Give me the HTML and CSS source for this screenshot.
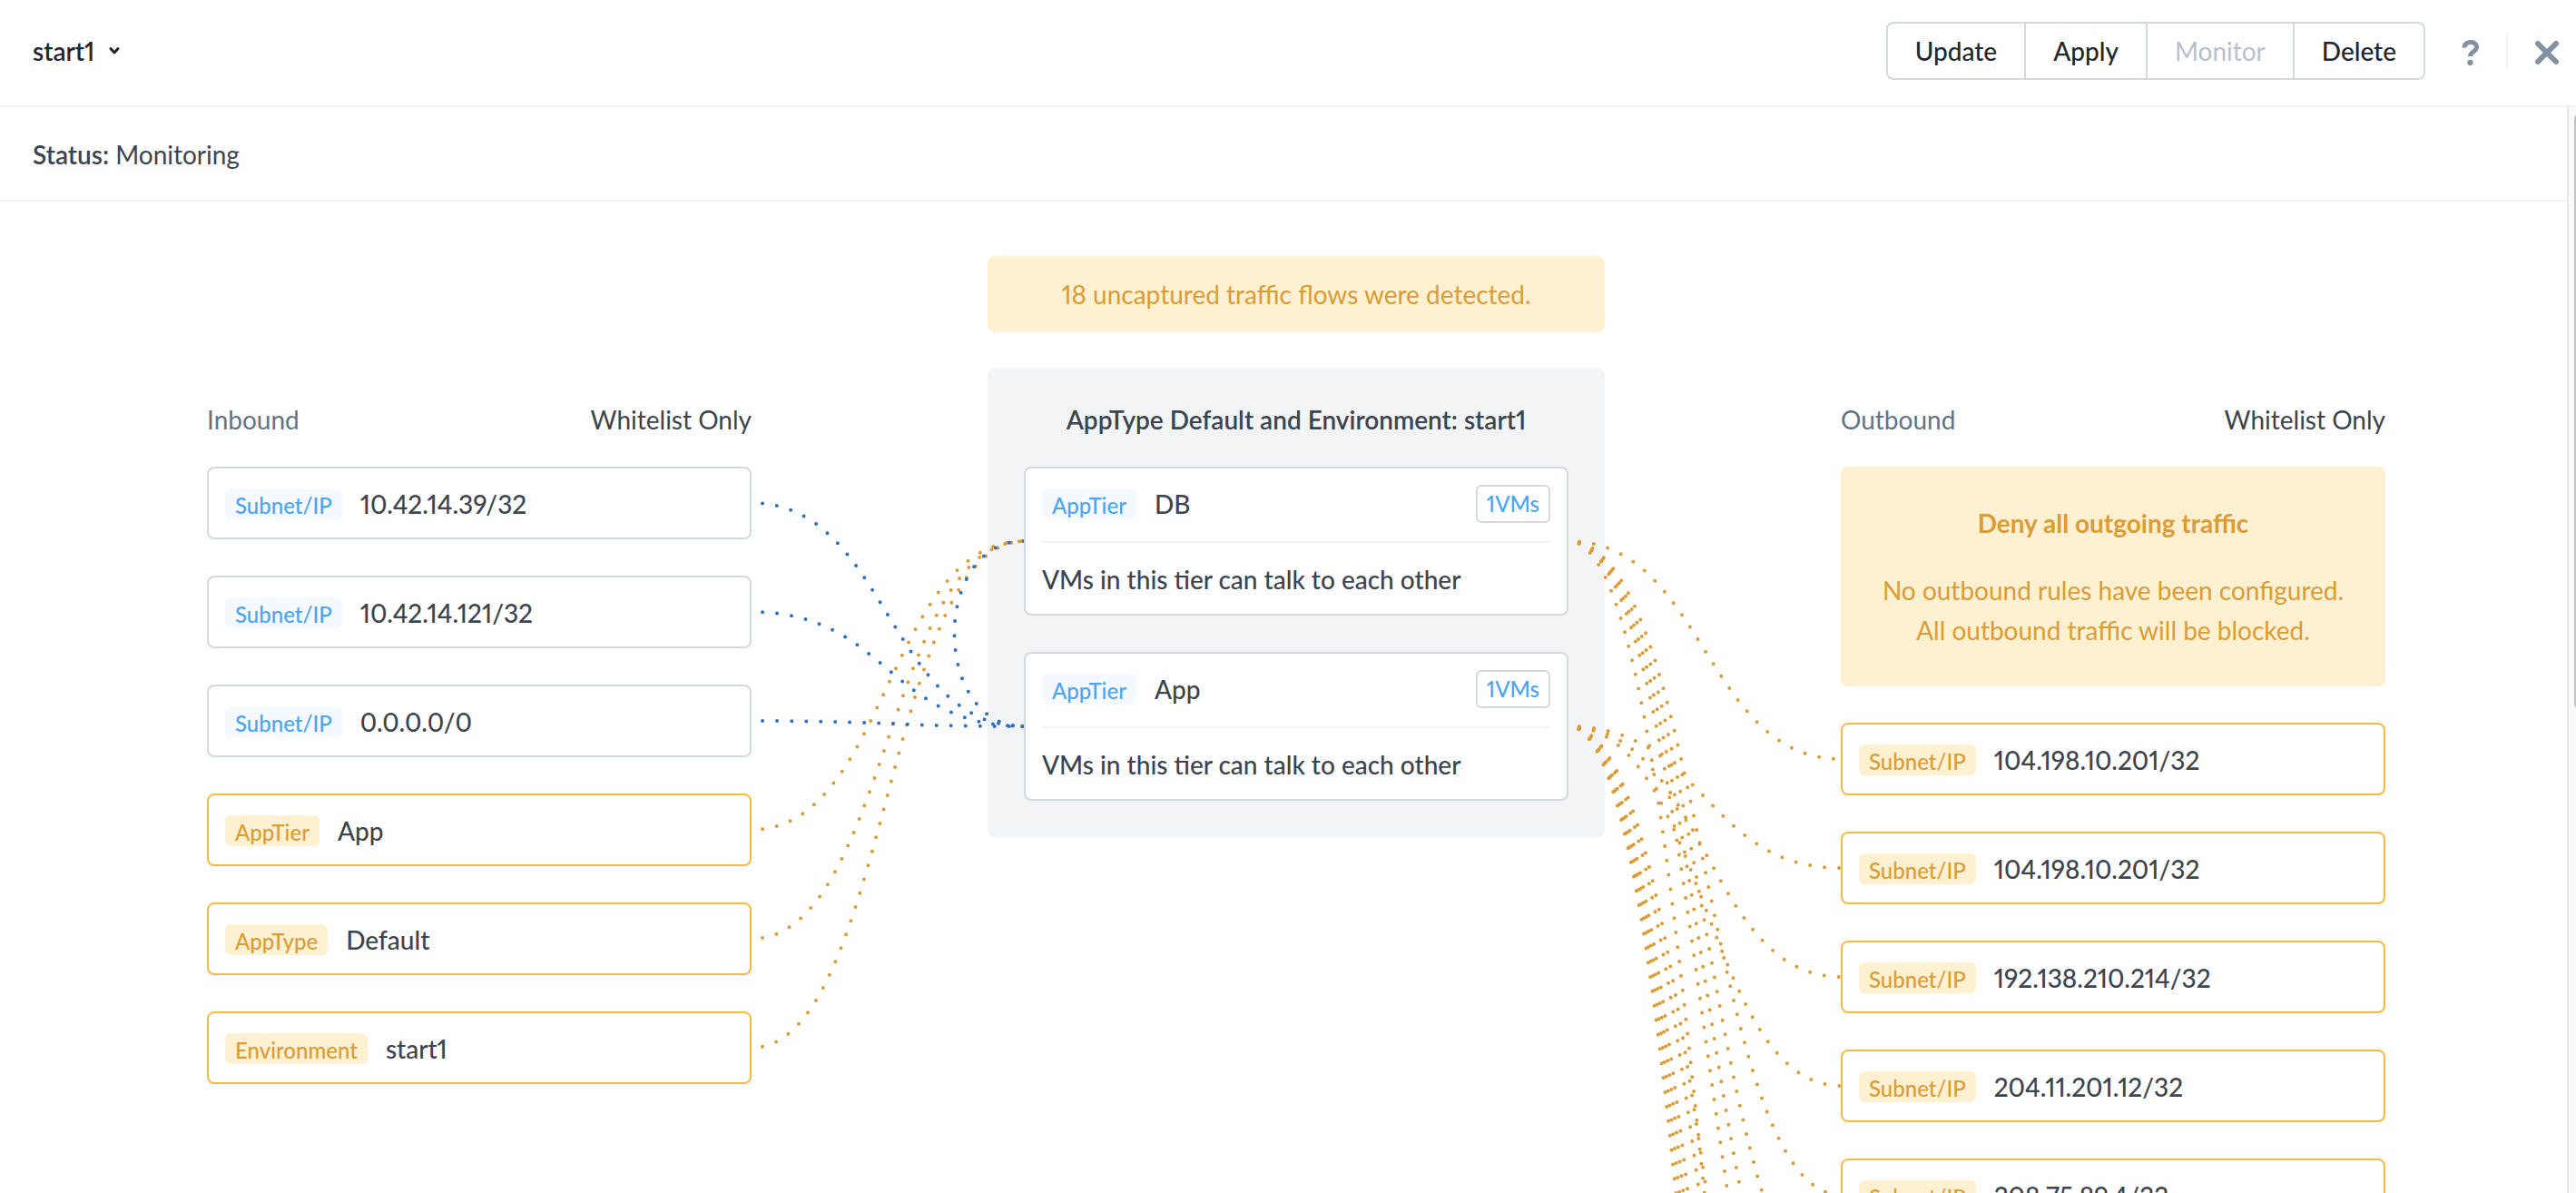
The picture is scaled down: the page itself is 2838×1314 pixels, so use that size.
FILE: index.html
```html
<!DOCTYPE html>
<html lang="en">
<head>
<meta charset="utf-8">
<title>start1 - Security Policy</title>
<link rel="stylesheet" href="styles.css">
</head>
<body>
<div class="app">
  <header class="topbar">
    <button class="policy-menu" type="button">start1
      <svg class="chevron" viewBox="0 0 12 10" aria-hidden="true"><path d="M2 2.5l4 4.5 4-4.5"/></svg>
    </button>
    <div class="actions">
      <div class="button-group">
        <button type="button">Update</button>
        <button type="button">Apply</button>
        <button type="button" disabled>Monitor</button>
        <button type="button">Delete</button>
      </div>
      <button class="icon-button" type="button" aria-label="Help">
        <svg class="help-icon" viewBox="0 0 20 28" aria-hidden="true"><path d="M3 8.500C3 0.500 16.500 0.500 16.500 8C16.500 13 9.500 12.500 9.500 18"/><circle cx="9.500" cy="25" r="3.200"/></svg>
      </button>
      <span class="divider"></span>
      <button class="icon-button" type="button" aria-label="Close">
        <svg class="close-icon" viewBox="0 0 28 28" aria-hidden="true"><path d="M4 4l20 20M24 4L4 24"/></svg>
      </button>
    </div>
  </header>
  <div class="body">
    <main class="content">
      <p class="status"><strong>Status:</strong> Monitoring</p>
      <div class="board" id="board">
        <section class="side">
          <div class="side-head"><h2>Inbound</h2><span>Whitelist Only</span></div>
          <ul class="rules">
            <li class="rule" data-to="app"><span class="tag">Subnet/IP</span>10.42.14.39/32</li>
            <li class="rule" data-to="app"><span class="tag">Subnet/IP</span>10.42.14.121/32</li>
            <li class="rule" data-to="app"><span class="tag">Subnet/IP</span>0.0.0.0/0</li>
            <li class="rule uncaptured" data-to="db"><span class="tag">AppTier</span>App</li>
            <li class="rule uncaptured" data-to="db"><span class="tag">AppType</span>Default</li>
            <li class="rule uncaptured" data-to="db"><span class="tag">Environment</span>start1</li>
          </ul>
        </section>
        <section class="center">
          <p class="alert">18 uncaptured traffic flows were detected.</p>
          <div class="panel">
            <h2>AppType Default and Environment: start1</h2>
            <article class="tier" id="db">
              <div class="tier-head"><span class="tag">AppTier</span><span class="tier-name">DB</span><button class="vms" type="button">1VMs</button></div>
              <p>VMs in this tier can talk to each other</p>
            </article>
            <article class="tier" id="app">
              <div class="tier-head"><span class="tag">AppTier</span><span class="tier-name">App</span><button class="vms" type="button">1VMs</button></div>
              <p>VMs in this tier can talk to each other</p>
            </article>
          </div>
        </section>
        <section class="side">
          <div class="side-head"><h2>Outbound</h2><span>Whitelist Only</span></div>
          <div class="notice">
            <h3>Deny all outgoing traffic</h3>
            <p>No outbound rules have been configured.<br>All outbound traffic will be blocked.</p>
          </div>
          <ul class="rules" id="outbound">
            <li class="rule uncaptured"><span class="tag">Subnet/IP</span>104.198.10.201/32</li>
            <li class="rule uncaptured"><span class="tag">Subnet/IP</span>104.198.10.201/32</li>
            <li class="rule uncaptured"><span class="tag">Subnet/IP</span>192.138.210.214/32</li>
            <li class="rule uncaptured"><span class="tag">Subnet/IP</span>204.11.201.12/32</li>
            <li class="rule uncaptured"><span class="tag">Subnet/IP</span>208.75.89.4/32</li>
          </ul>
        </section>
        <svg class="flows" id="flows" aria-hidden="true"></svg>
      </div>
    </main>
    <div class="scrollbar"><div class="thumb"></div></div>
  </div>
</div>
<script src="script.js"></script>
</body>
</html>
```
FILE: styles.css
```css
* { box-sizing: border-box; }

body {
  margin: 0;
  background: #fff;
  color: #3b444f;
  font-family: Lato, "Open Sans", sans-serif;
  font-size: 28px;
  font-variant-numeric: proportional-nums;
  line-height: 44px;
}

h2, h3, p, ul { margin: 0; padding: 0; font-size: inherit; }
ul { list-style: none; }
button {
  margin: 0;
  padding: 0;
  border: 0;
  background: none;
  color: #22272e;
  font: inherit;
  font-variant-numeric: proportional-nums;
}

.app {
  display: flex;
  flex-direction: column;
  height: 100vh;
  overflow: hidden;
}

.topbar {
  display: flex;
  flex: none;
  align-items: center;
  justify-content: space-between;
  padding: 24px 18px 28px 36px;
  border-bottom: 2px solid #f2f3f5;
}
.policy-menu {
  display: flex;
  align-items: center;
  gap: 16px;
  font-weight: 600;
}
svg { fill: none; stroke: currentColor; }
.chevron { width: 12px; height: 10px; stroke-width: 3; stroke-linecap: round; stroke-linejoin: round; }

.actions { display: flex; align-items: center; }
.button-group {
  display: flex;
  margin-right: 40px;
  border: 2px solid #d4d9df;
  border-radius: 8px;
}
.button-group button { height: 60px; padding: 0 30px; font-weight: 500; }
.button-group button + button { border-left: 2px solid #d4d9df; }
.button-group button:disabled { color: #b8c0cc; font-weight: 400; }
.icon-button { display: flex; padding-top: 4px; color: #8290a2; }
.help-icon { width: 20px; height: 28px; stroke-width: 5; }
.help-icon circle { fill: currentColor; stroke: none; }
.close-icon { width: 28px; height: 28px; stroke-width: 6; stroke-linecap: round; }
.divider { width: 2px; height: 40px; margin: 0 29px; background: #f2f3f5; }

.body { display: flex; flex: 1; min-height: 0; }
.content { flex: 1; overflow: hidden; }
.status {
  padding: 30px 36px 28px;
  border-bottom: 2px solid #f2f3f5;
}
.status strong { font-weight: 600; }

.board {
  position: relative;
  display: flex;
  justify-content: space-between;
  padding: 60px 200px 60px 228px;
}
.side { width: 600px; padding-top: 158px; }
.side-head {
  display: flex;
  justify-content: space-between;
  margin-bottom: 30px;
}
.side-head h2 { color: #627386; font-weight: 400; }

.rules { display: flex; flex-direction: column; gap: 40px; }
.rule {
  display: flex;
  align-items: center;
  gap: 20px;
  height: 80px;
  padding: 2px 18px 0;
  border: 2px solid #d4d9df;
  border-radius: 8px;
  background: #fff;
  font-weight: 500;
}
.tag {
  padding: 4px 11px 0;
  border-radius: 6px;
  background: #f4faff;
  color: #4ba5f3;
  font-size: 24px;
  font-weight: 500;
  line-height: 30px;
}
.uncaptured { border-color: #f6bb43; }
.uncaptured .tag { background: #fdf1d2; color: #dc9b35; }

.center { width: 680px; }
.alert, .notice {
  border-radius: 8px;
  background: #fdf1d2;
  color: #dc9b35;
  text-align: center;
}
.alert { margin-bottom: 40px; padding: 20px; }
.notice { margin-bottom: 40px; padding: 40px 20px; }
.notice h3 { margin-bottom: 30px; font-weight: 700; }

.panel {
  display: flex;
  flex-direction: column;
  gap: 40px;
  padding: 34px 40px 40px;
  border-radius: 8px;
  background: #f2f4f6;
}
.panel h2 { margin-bottom: -10px; font-weight: 600; text-align: center; }
.tier {
  position: relative;
  z-index: 1;
  padding: 0 18px;
  border: 2px solid #d4d9df;
  border-radius: 8px;
  background: #fff;
  font-weight: 500;
}
.tier-head {
  display: flex;
  align-items: center;
  gap: 20px;
  height: 82px;
  padding-bottom: 2px;
  border-bottom: 2px solid #f2f3f5;
}
.vms {
  height: 42px;
  margin-left: auto;
  padding: 0 10px;
  border: 2px solid #d4d9df;
  border-radius: 6px;
  color: #4ba5f3;
  font-size: 24px;
  line-height: 36px;
}
.tier p { padding: 18px 0 16px; }

.flows {
  position: absolute;
  top: 0;
  left: 0;
  width: 100%;
  height: 100%;
  overflow: visible;
  pointer-events: none;
}
.flow {
  stroke: #2c6fc7;
  stroke-width: 4;
  stroke-linecap: round;
  stroke-dasharray: 0 16;
  stroke-dashoffset: 4;
}
.flow.new { stroke: #dc9b35; }

.scrollbar {
  width: 10px;
  overflow: hidden;
  border-left: 2px solid #e8e8e8;
  background: #fafafa;
}
.thumb {
  width: 14px;
  height: 55%;
  margin: 6px 0 0 6px;
  border-radius: 7px;
  background: #c1c1c1;
}
```
FILE: script.js
```js
// Draws the dotted traffic flows between the rules and the tiers.
const board = document.getElementById('board');
const flows = document.getElementById('flows');
const PITCH = 120;

// Outbound flow targets by tier: the row index in the outbound list.
const outboundFlows = { db: [0, 4, 5, 6, 7, 10], app: [1, 2, 3, 8, 9, 11, 12, 13, 14] };

function box(el) {
  const o = board.getBoundingClientRect();
  const r = el.getBoundingClientRect();
  return { left: r.left - o.left, right: r.right - o.left, mid: (r.top + r.bottom) / 2 - o.top };
}

function addPath(d, isNew) {
  const p = document.createElementNS('http://www.w3.org/2000/svg', 'path');
  p.setAttribute('d', d);
  p.setAttribute('class', isNew ? 'flow new' : 'flow');
  flows.appendChild(p);
}

function curve(x1, y1, x2, y2) {
  const m = (x1 + x2) / 2;
  return `M${x1} ${y1}C${m} ${y1} ${m} ${y2} ${x2} ${y2}`;
}

function draw() {
  flows.replaceChildren();
  const tiers = { db: box(document.getElementById('db')), app: box(document.getElementById('app')) };
  const rules = [...document.querySelectorAll('.rule[data-to]')].reverse();
  for (const rule of rules) {
    const from = box(rule);
    const to = tiers[rule.dataset.to];
    addPath(curve(from.right, from.mid, to.left, to.mid), rule.classList.contains('uncaptured'));
  }
  const { db, app } = tiers;
  const bend = db.left - (app.mid - db.mid) / 2;
  addPath(`M${app.left} ${app.mid}C${bend} ${app.mid} ${bend} ${db.mid} ${db.left} ${db.mid}`, false);

  const first = box(document.querySelector('#outbound .rule'));
  for (const [name, rows] of Object.entries(outboundFlows)) {
    for (const row of rows) {
      addPath(curve(tiers[name].right, tiers[name].mid, first.left, first.mid + row * PITCH), true);
    }
  }
}

draw();
window.addEventListener('resize', draw);
```
